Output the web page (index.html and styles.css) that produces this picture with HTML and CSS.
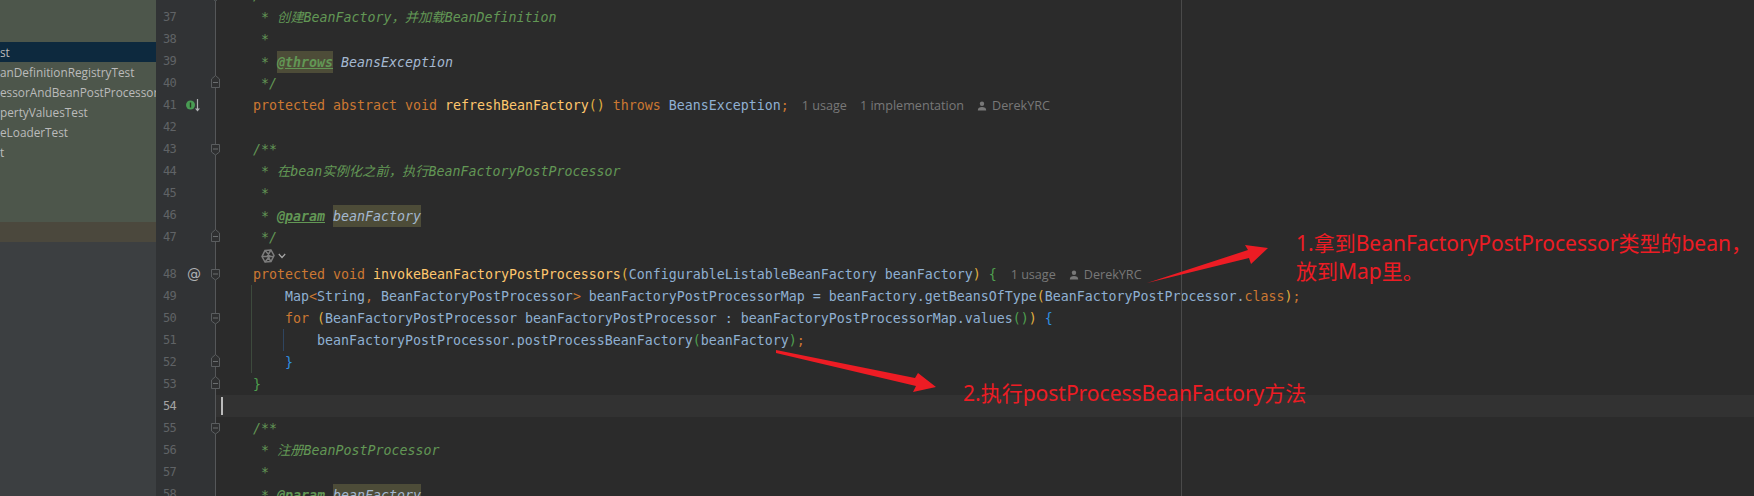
FILE: index.html
```html
<!DOCTYPE html>
<html lang="zh">
<head>
<meta charset="utf-8">
<title>AbstractApplicationContext</title>
<link rel="stylesheet" href="styles.css">
</head>
<body>
<svg class="defs" width="0" height="0" aria-hidden="true">
  <symbol id="fold-open" viewBox="0 0 9 22"><path d="M.5 6.5H8.5V14L4.5 17 .5 14Z" fill="#2f3031" stroke="#5a5d5f"/><path d="M2 11H7" stroke="#6a6d6f"/></symbol>
  <symbol id="fold-close" viewBox="0 0 9 22"><path d="M.5 15.5H8.5V7L4.5 3.5 .5 7Z" fill="#2f3031" stroke="#5a5d5f"/><path d="M2 10.5H7" stroke="#6a6d6f"/></symbol>
  <symbol id="user" viewBox="0 0 10 10"><circle cx="5" cy="2.8" r="2.2" fill="#787878"/><path d="M.8 9.5C.8 6.8 2.5 6 5 6S9.2 6.8 9.2 9.5Z" fill="#787878"/></symbol>
</svg>
<div class="window">
  <aside class="sidebar">
    <div class="tree">
      <div class="tree-row selected">st</div>
      <div class="tree-row">anDefinitionRegistryTest</div>
      <div class="tree-row">essorAndBeanPostProcessorTest</div>
      <div class="tree-row">pertyValuesTest</div>
      <div class="tree-row">eLoaderTest</div>
      <div class="tree-row">t</div>
    </div>
    <div class="tree-row recent"></div>
  </aside>
  <main class="editor">
    <div class="line"><div class="gutter"><span class="num">36</span><span class="mark"></span><span class="fold"><svg><use href="#fold-open"/></svg></span></div><div class="code"><span class="c">/**</span></div></div>
    <div class="line"><div class="gutter"><span class="num">37</span><span class="mark"></span><span class="fold"></span></div><div class="code"><span class="c"> * 创建BeanFactory，并加载BeanDefinition</span></div></div>
    <div class="line"><div class="gutter"><span class="num">38</span><span class="mark"></span><span class="fold"></span></div><div class="code"><span class="c"> *</span></div></div>
    <div class="line"><div class="gutter"><span class="num">39</span><span class="mark"></span><span class="fold"></span></div><div class="code"><span class="c"> * </span><span class="tag hl">@throws</span><span class="c"> </span><span class="dv">BeansException</span></div></div>
    <div class="line"><div class="gutter"><span class="num">40</span><span class="mark"></span><span class="fold"><svg><use href="#fold-close"/></svg></span></div><div class="code"><span class="c"> */</span></div></div>
    <div class="line"><div class="gutter"><span class="num">41</span><span class="mark"><svg class="impl" width="16" height="16" viewBox="0 0 16 16"><circle cx="5.5" cy="8" r="4.5" fill="#499c54"/><path d="M5.5 5.5V10.5" stroke="#26351f" stroke-width="1.4"/><path d="M12.5 2V12" stroke="#afb1b3" stroke-width="1.2"/><path d="M10 11.5H15L12.5 14.5Z" fill="#afb1b3"/></svg></span><span class="fold"></span></div><div class="code"><span class="k">protected abstract void</span> <span class="m">refreshBeanFactory</span><span class="y">()</span> <span class="k">throws</span> <span class="t">BeansException</span><span class="k">;</span><span class="hints first"><span class="hint">1 usage</span><span class="hint">1 implementation</span><span class="hint"><svg class="user"><use href="#user"/></svg>DerekYRC</span></span></div></div>
    <div class="line"><div class="gutter"><span class="num">42</span><span class="mark"></span><span class="fold"></span></div><div class="code"></div></div>
    <div class="line"><div class="gutter"><span class="num">43</span><span class="mark"></span><span class="fold"><svg><use href="#fold-open"/></svg></span></div><div class="code"><span class="c">/**</span></div></div>
    <div class="line"><div class="gutter"><span class="num">44</span><span class="mark"></span><span class="fold"></span></div><div class="code"><span class="c"> * 在bean实例化之前，执行BeanFactoryPostProcessor</span></div></div>
    <div class="line"><div class="gutter"><span class="num">45</span><span class="mark"></span><span class="fold"></span></div><div class="code"><span class="c"> *</span></div></div>
    <div class="line"><div class="gutter"><span class="num">46</span><span class="mark"></span><span class="fold"></span></div><div class="code"><span class="c"> * </span><span class="tag">@param</span><span class="c"> </span><span class="dv hl">beanFactory</span></div></div>
    <div class="line"><div class="gutter"><span class="num">47</span><span class="mark"></span><span class="fold"><svg><use href="#fold-close"/></svg></span></div><div class="code"><span class="c"> */</span></div></div>
    <div class="line inlay"><div class="gutter"><span class="num"></span><span class="mark"></span><span class="fold"></span></div><div class="code inlay-code"><svg class="swirl" width="14" height="14" viewBox="0 0 14 14" fill="none" stroke="#7d7d7d" stroke-width="1.5"><path d="M4 1.5 10 1 13 6.5 10 12.5 4 13 1 7.5Z"/><path d="M4 1.5 9 7 4 13M10 1 6 7.5H13M1 7.5H6M10 12.5 7 8"/></svg><svg width="8" height="6" viewBox="0 0 8 6" fill="none" stroke="#a8a8a8" stroke-width="1.2"><path d="M.8 1 4 4.5 7.2 1"/></svg></div></div>
    <div class="line"><div class="gutter"><span class="num">48</span><span class="mark"><span class="at">@</span></span><span class="fold"><svg><use href="#fold-open"/></svg></span></div><div class="code"><span class="k">protected void</span> <span class="m">invokeBeanFactoryPostProcessors</span><span class="y">(</span><span class="t">ConfigurableListableBeanFactory beanFactory</span><span class="y">)</span> <span class="g">{</span><span class="hints second"><span class="hint">1 usage</span><span class="hint"><svg class="user"><use href="#user"/></svg>DerekYRC</span></span></div></div>
    <div class="line"><div class="gutter"><span class="num">49</span><span class="mark"></span><span class="fold"></span></div><div class="code guide-a"><span class="t">    Map</span><span class="k">&lt;</span><span class="t">String</span><span class="k">,</span><span class="t"> BeanFactoryPostProcessor</span><span class="k">&gt;</span><span class="t"> beanFactoryPostProcessorMap = beanFactory.getBeansOfType</span><span class="y">(</span><span class="t">BeanFactoryPostProcessor.</span><span class="k">class</span><span class="y">)</span><span class="k">;</span></div></div>
    <div class="line"><div class="gutter"><span class="num">50</span><span class="mark"></span><span class="fold"><svg><use href="#fold-open"/></svg></span></div><div class="code guide-a">    <span class="k">for</span> <span class="y">(</span><span class="t">BeanFactoryPostProcessor beanFactoryPostProcessor : beanFactoryPostProcessorMap.values</span><span class="g">()</span><span class="y">)</span> <span class="b">{</span></div></div>
    <div class="line"><div class="gutter"><span class="num">51</span><span class="mark"></span><span class="fold"></span></div><div class="code guide-a guide-b"><span class="t">        beanFactoryPostProcessor.postProcessBeanFactory</span><span class="g">(</span><span class="t">beanFactory</span><span class="g">)</span><span class="k">;</span></div></div>
    <div class="line"><div class="gutter"><span class="num">52</span><span class="mark"></span><span class="fold"><svg><use href="#fold-close"/></svg></span></div><div class="code guide-a">    <span class="b">}</span></div></div>
    <div class="line"><div class="gutter"><span class="num">53</span><span class="mark"></span><span class="fold"><svg><use href="#fold-close"/></svg></span></div><div class="code"><span class="g">}</span></div></div>
    <div class="line current"><div class="gutter"><span class="num">54</span><span class="mark"></span><span class="fold"></span></div><div class="code"><span class="caret"></span></div></div>
    <div class="line"><div class="gutter"><span class="num">55</span><span class="mark"></span><span class="fold"><svg><use href="#fold-open"/></svg></span></div><div class="code"><span class="c">/**</span></div></div>
    <div class="line"><div class="gutter"><span class="num">56</span><span class="mark"></span><span class="fold"></span></div><div class="code"><span class="c"> * 注册BeanPostProcessor</span></div></div>
    <div class="line"><div class="gutter"><span class="num">57</span><span class="mark"></span><span class="fold"></span></div><div class="code"><span class="c"> *</span></div></div>
    <div class="line"><div class="gutter"><span class="num">58</span><span class="mark"></span><span class="fold"></span></div><div class="code"><span class="c"> * </span><span class="tag">@param</span><span class="c"> </span><span class="dv hl">beanFactory</span></div></div>
  </main>
</div>
<svg class="arrows" width="1754" height="496" viewBox="0 0 1754 496" aria-hidden="true">
  <path d="M1147 283 1248 250 1245 245 1268 248 1251 264 1249 258Z" fill="#ed1c24"/>
  <path d="M776 350 776 353 916 386 913 392 936 387 918 373 915 378Z" fill="#ed1c24"/>
</svg>
<p class="note note-one">1.拿到BeanFactoryPostProcessor类型的bean，<br>放到Map里。</p>
<p class="note note-two">2.执行postProcessBeanFactory方法</p>
</body>
</html>
```
FILE: styles.css
```css
* { box-sizing: border-box; }
html, body { margin: 0; height: 100%; overflow: hidden; background: #2b2b2b; }
.defs { display: block; height: 0; }
.window { display: flex; height: 496px; overflow: hidden; }

.sidebar { flex: none; width: 156px; background: #3c3f41; overflow: hidden; }
.tree { height: 222px; padding-top: 42px; background: #4d564b; }
.tree-row {
  height: 20px; white-space: nowrap; overflow: hidden;
  font: 11.8px/21px "Open Sans", "Noto Sans", sans-serif; color: #bbbbbb;
}
.selected { background: #0d293e; }
.recent { background: #4b483d; }

.editor { flex: 1; margin-top: -16px; position: relative; min-width: 0; }
.editor::after { content: ""; position: absolute; top: 0; bottom: 0; left: 1025px; width: 1px; background: #4a4a4a; }

.line { display: flex; height: 22px; }
.inlay { height: 15px; }
.gutter {
  flex: none; display: flex; width: 60px; background: #313335;
  border-right: 1px solid #555759;
}
.num {
  flex: none; width: 20px; text-align: right;
  font: 12px/22px "DejaVu Sans Mono", monospace; letter-spacing: -.7px; color: #606366;
}
.current .num { color: #a4a3a3; }
.current .code { background: #323232; padding-left: 5px; padding-top: 0; }
.mark { flex: none; width: 35px; display: flex; align-items: center; }
.impl { margin-left: 9px; }
.at { margin-left: 11px; font: 14px/22px "DejaVu Sans", sans-serif; color: #afb1b3; }
.fold { flex: none; width: 4px; }
.fold svg { display: block; width: 9px; height: 22px; }

.code {
  flex: 1; padding: 1px 0 0 37px; white-space: pre;
  font: 13.29px/22px "DejaVu Sans Mono", "Noto Sans CJK SC", monospace;
  color: #a9b7c6;
}
.guide-a { background: linear-gradient(#3d4a3d, #3d4a3d) 35px 0 / 1px 100% no-repeat; }
.guide-b { background: linear-gradient(#2f4560, #2f4560) 67px 0 / 1px 100% no-repeat, linear-gradient(#3d4a3d, #3d4a3d) 35px 0 / 1px 100% no-repeat; }
.inlay-code { display: flex; align-items: center; gap: 3px; padding: 0 0 0 45px; }
.caret { display: inline-block; width: 2px; height: 18px; background: #bbbbbb; vertical-align: middle; }

.c { color: #629755; font-style: italic; }
.k { color: #cc7832; }
.m { color: #ffc66d; }
.t { color: #8fb0d2; }
.y { color: #e0b040; }
.g { color: #4fa04f; }
.b { color: #2f8fe0; }
.dv { color: #a4b8d0; font-style: italic; }
.tag { color: #629755; font-style: italic; font-weight: bold; text-decoration: underline; }
.hl { display: inline-block; height: 22px; padding-top: 1px; background: #4d4c38; }

.hints { font: 12.6px/22px "Open Sans", "Noto Sans", sans-serif; color: #787878; }
.first { margin-left: 13px; }
.second { margin-left: 14px; }
.hint { margin-right: 13px; }
.user { width: 10px; height: 10px; margin-right: 5px; vertical-align: -1px; }

.arrows { position: absolute; left: 0; top: 0; pointer-events: none; }
.note {
  position: absolute; margin: 0; white-space: nowrap;
  font: 21px/28px "Noto Sans", "Noto Sans CJK SC", sans-serif; color: #ed1c24;
}
.note-one { left: 1296px; top: 229px; }
.note-two { left: 963px; top: 379px; }
```
